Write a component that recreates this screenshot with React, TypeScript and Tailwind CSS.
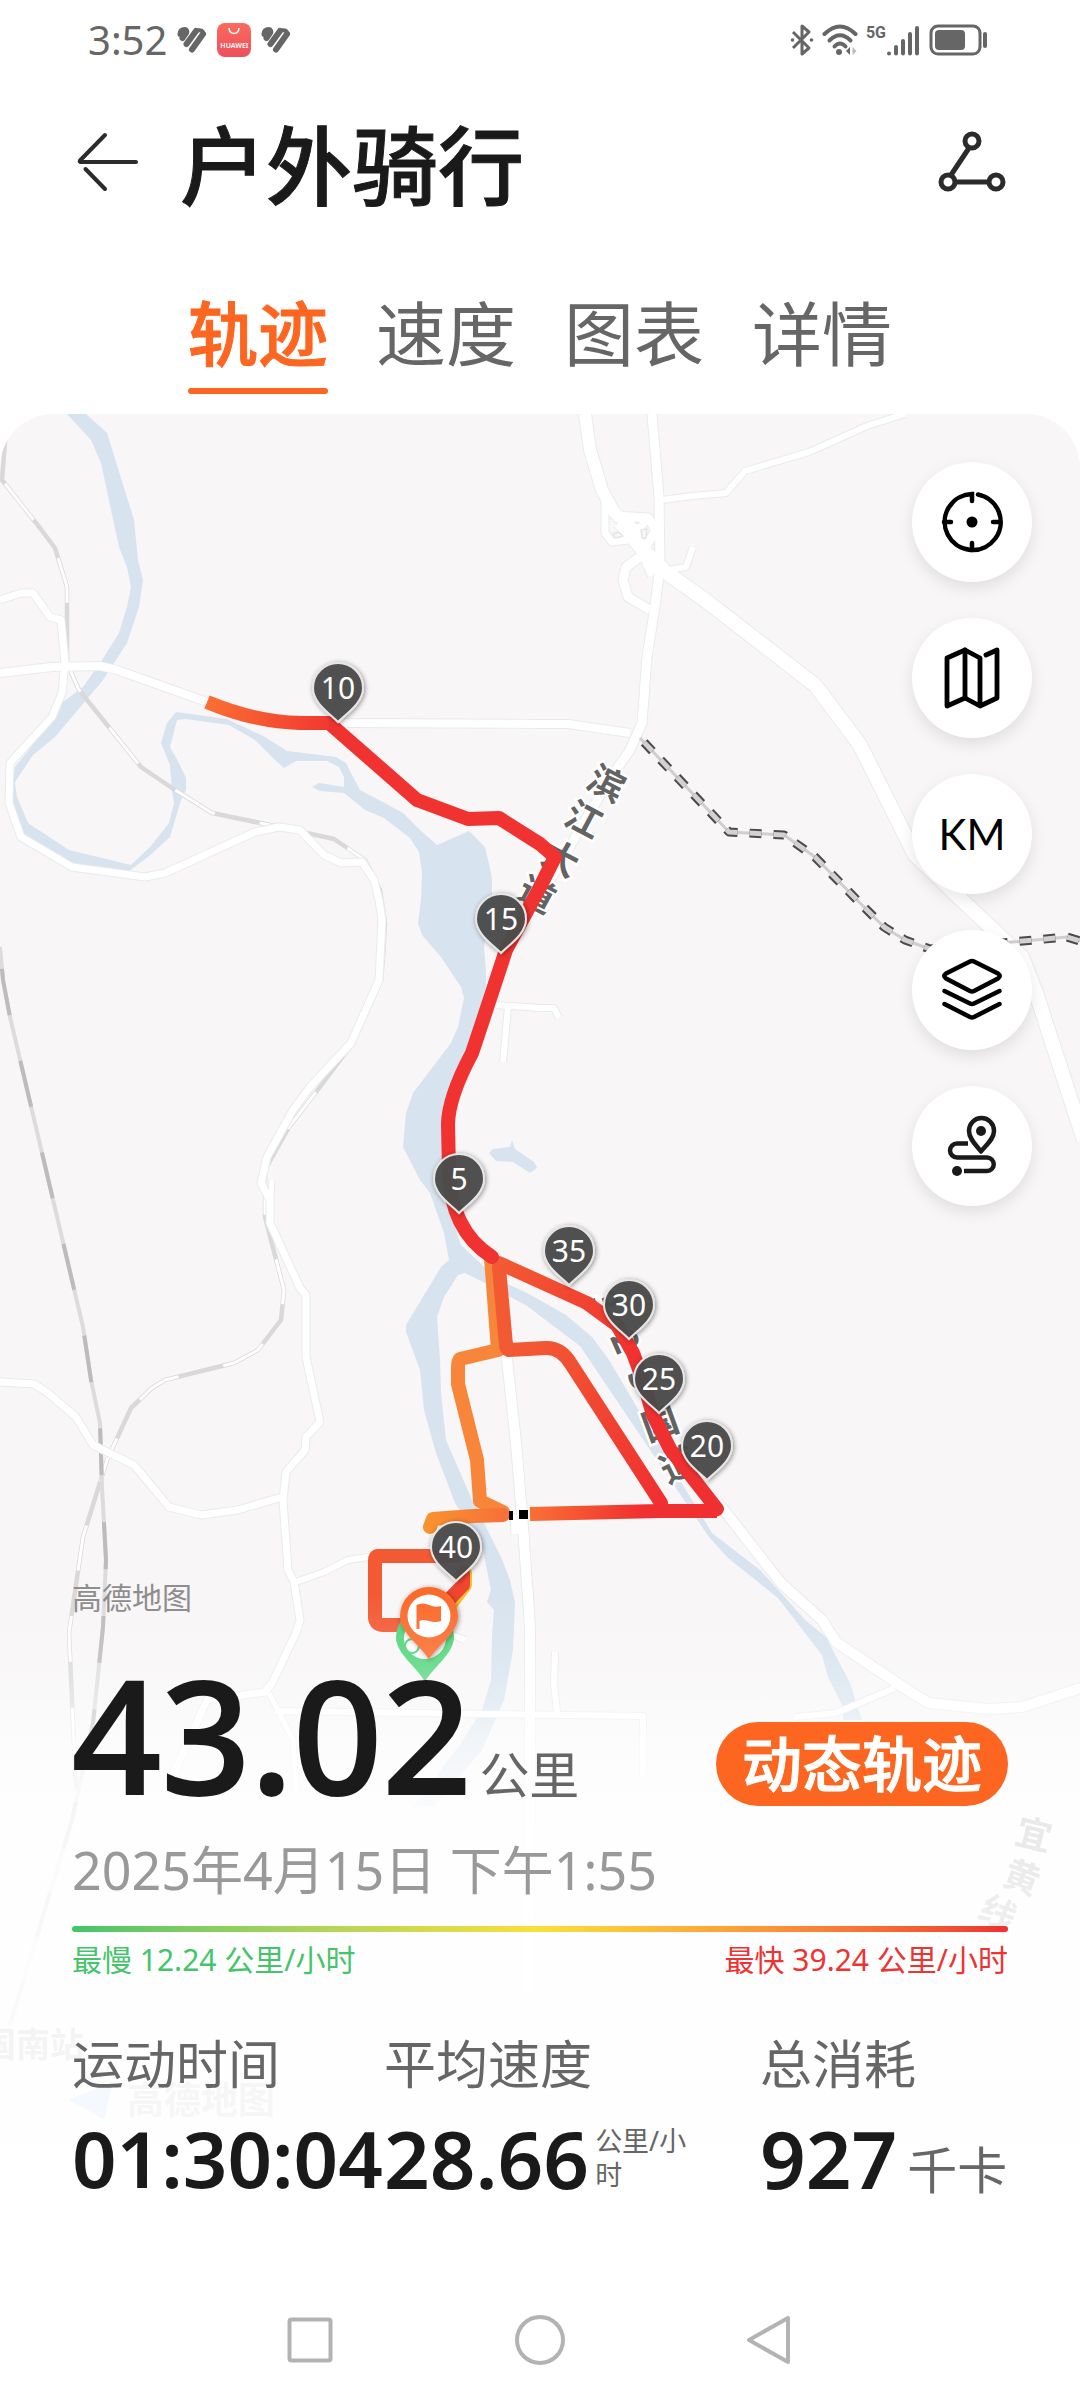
import React from "react";

const FONT = "font-['Noto_Sans','Noto_Sans_CJK_SC',sans-serif]";

/* ---------- Status bar ---------- */

function HeartMark() {
  return (
    <svg viewBox="0 0 30 28" className="h-7 w-[30px]" aria-hidden="true">
      <g fill="none" stroke="#666" strokeLinecap="round" strokeWidth="6">
        <path d="M3.500 8 Q4 4 7.500 4 Q10 4 9 7 L5.500 12" />
        <path d="M19 5 L9.500 18" />
        <path d="M26 8 L15 23.500" />
        <path d="M20 4.500 Q25.500 3 26.500 8" strokeWidth="4" />
      </g>
    </svg>
  );
}

function StatusBar() {
  return (
    <div className="flex h-20 items-center justify-between pr-[90px] pl-[88px] text-[#666]">
      <div className="flex items-center gap-2.5">
        <span className="text-[40px] leading-none">3:52</span>
        <HeartMark />
        <span className="flex h-[34px] w-[34px] flex-col items-center justify-between rounded-lg bg-linear-to-b from-[#fb6a5c] to-[#ee4f5c] pt-1 pb-2 text-white">
          <svg viewBox="0 0 12 8" className="h-2 w-3" fill="none" stroke="#fff" strokeWidth="1.500" aria-hidden="true">
            <path d="M1 1 Q1.500 6.500 6 6.500 Q10.500 6.500 11 1" />
          </svg>
          <span className="text-[7px] leading-none font-semibold">HUAWEI</span>
        </span>
        <HeartMark />
      </div>
      <div className="flex items-center gap-2">
        <svg viewBox="0 0 24 34" className="h-[34px] w-6" fill="none" stroke="#666" strokeWidth="3" aria-label="Bluetooth">
          <path d="M3 9 L19 25 L12 31 V3 L19 9 L3 25" strokeLinejoin="round" />
          <circle cx="2.500" cy="17" r="1.800" fill="#666" stroke="none" />
          <circle cx="21.500" cy="17" r="1.800" fill="#666" stroke="none" />
        </svg>
        <svg viewBox="0 0 36 34" className="h-[34px] w-9" fill="none" stroke="#666" strokeWidth="4" strokeLinecap="round" aria-label="Wi-Fi">
          <path d="M2.500 11 Q18 -4 33.500 11" />
          <path d="M7.500 17.500 Q18 7 28.500 17.500" />
          <path d="M12.500 23.500 Q18 17.500 23.500 23.500" />
          <circle cx="17" cy="29" r="3" fill="#666" stroke="none" />
          <path d="M28 24 v8 l-4 -4 z" fill="#666" stroke="none" />
          <path d="M30.500 24 v8 l4 -4 z" fill="#bbb" stroke="none" />
        </svg>
        <div className="flex items-start">
          <span className="font-[Roboto] text-[16px] leading-5 font-bold">5G</span>
          <svg viewBox="0 0 34 34" className="h-[34px] w-[34px]" stroke="#666" strokeWidth="4" strokeLinecap="round" aria-label="Signal">
            <path d="M3 30.500 V30.500 M10 30.500 V24 M17 30.500 V18 M24 30.500 V11 M31 30.500 V5" />
          </svg>
        </div>
        <svg viewBox="0 0 62 34" className="h-[34px] w-[62px]" aria-label="Battery">
          <rect x="3" y="3" width="49" height="28" rx="7" fill="none" stroke="#666" strokeWidth="3" />
          <rect x="7" y="7" width="30" height="20" rx="4" fill="#666" />
          <path d="M57 11 V23" stroke="#666" strokeWidth="4" strokeLinecap="round" />
        </svg>
      </div>
    </div>
  );
}

/* ---------- Header ---------- */

function Header() {
  return (
    <header className="flex h-[164px] items-center px-[72px]">
      <button type="button" aria-label="返回" className="h-16 w-[72px]">
        <svg viewBox="0 0 72 64" className="h-16 w-[72px]" fill="none" stroke="#2b2b2b" strokeWidth="4" strokeLinecap="round">
          <path d="M33 5 L8 30.500 Q7 32 9 32 H64" strokeLinejoin="round" />
          <path d="M13.500 39 L33 59" />
        </svg>
      </button>
      <h1 className="ml-9 flex-1 pt-2 text-[86px] leading-[120px] font-medium text-[#1a1a1a] [-webkit-text-stroke:1px_#1a1a1a]">
        户外骑行
      </h1>
      <button type="button" aria-label="分享" className="h-16 w-[72px]">
        <svg viewBox="0 0 72 64" className="h-16 w-[72px]" fill="none" stroke="#2b2b2b" strokeWidth="5">
          <circle cx="36" cy="11" r="7" />
          <circle cx="12" cy="52" r="7" />
          <circle cx="60" cy="52" r="7" />
          <path d="M33 18 L15 45 M19 52 H53" />
        </svg>
      </button>
    </header>
  );
}

const TABS = ["轨迹", "速度", "图表", "详情"];

function Tabs() {
  return (
    <nav className="flex justify-center gap-12 pt-10 pb-5" role="tablist">
      {TABS.map((tab, i) => (
        <button
          key={tab}
          type="button"
          role="tab"
          aria-selected={i === 0}
          className={
            i === 0
              ? "flex flex-col gap-1 text-[70px] leading-[100px] font-medium text-[#fc6620] [-webkit-text-stroke:1px_#fc6620]"
              : "flex flex-col gap-1 text-[70px] leading-[100px] text-[#666]"
          }
        >
          {tab}
          <span className={i === 0 ? "h-1.5 w-full rounded-full bg-[#fc6620]" : "h-1.5 w-full"} />
        </button>
      ))}
    </nav>
  );
}

/* ---------- Map ---------- */

const WATER =
  "67,414 91,440 101,463 119,547 127,567 131,587 127,607 119,633 102,660 83,687 59,705 53,717 31,747 15,767 12,783 12,807 21,837 65,865 129,871 148,857 170,837 181,800 186,790 186,778 179,763 170,747 177,720 186,719 229,725 255,740 275,760 284,768 296,761 327,761 339,767 344,777 344,787 319,783 312,787 320,791 344,793 365,810 384,818 410,838 419,852 422,873 421,900 418,923 422,935 441,957 461,987 464,998 458,1027 451,1043 413,1093 406,1113 403,1147 420,1180 430,1193 444,1233 449,1260 441,1267 406,1325 406,1332 420,1370 424,1410 436,1453 455,1503 482,1545 491,1590 487,1602 494,1610 492,1637 491,1680 482,1710 461,1743 413,1807 434,1807 482,1750 504,1700 513,1650 515,1603 510,1580 501,1557 486,1527 472,1500 446,1440 441,1393 440,1360 437,1317 444,1297 458,1275 465,1273 489,1285 527,1306 580,1346 640,1435 709,1537 728,1558 778,1598 822,1655 828,1677 843,1707 843,1720 862,1720 850,1683 826,1637 805,1620 781,1593 760,1570 712,1533 678,1477 609,1360 592,1337 566,1315 527,1293 497,1279 477,1260 461,1245 448,1207 443,1130 447,1110 470,1050 486,985 486,973 484,947 492,910 492,880 491,873 485,847 469,831 437,845 420,830 403,813 379,800 360,790 351,773 346,763 336,757 287,751 265,737 227,719 176,712 167,723 161,743 170,765 172,790 174,803 169,823 150,847 131,865 69,850 28,823 17,797 15,782 33,755 55,737 103,680 127,643 139,607 143,580 138,560 134,520 107,433 86,414";

const ROADS: { d: string; w: number }[] = [
  { w: 8, d: "M0 673 L52 667 L100 666 L117 670 L207 702 L260 718 L344 723 L540 724 L568 724 L630 733" },
  { w: 7, d: "M0 600 L21 593 L33 593 L50 617 L61 620 L65 663 L62 693 L52 717 L10 763 L9 803 L21 837 L72 867 L145 877 L165 873 L255 832 L279 827 L300 830 L324 855 L341 863 L362 862 L374 880 L379 900 L382 920 L379 980 L351 1043 L310 1087 L293 1110 L267 1157 L261 1183 L270 1200 L270 1223 L300 1288 L306 1295 L306 1357 L320 1422 L306 1437 L305 1450 L286 1472 L283 1500 L288 1570 L294 1582 L300 1620 L296 1633 L272 1683 L265 1692 L207 1700 L165 1793" },
  { w: 7, d: "M0 1382 L34 1384 L48 1393 L76 1417 L93 1445 L134 1465 L169 1507 L201 1515 L238 1510 L282 1497" },
  { w: 6, d: "M296 1582 L324 1572 L348 1560 L368 1557 L400 1556" },
  { w: 5, d: "M269 1693 L293 1740 L296 1790" },
  { w: 5, d: "M272 1180 L270 1215" },
  { w: 10, d: "M506 1350 L516 1443 L523 1527 L530 1627 L530 1807 L528 1990" },
  { w: 11, d: "M516 1515 L517 1534" },
  { w: 12, d: "M585 414 L590 450 L602 490 L614 512 L632 528 L654 575" },
  { w: 9, d: "M652 414 L659 497 L660 567 L654 613 L647 657 L642 723 L630 750 L609 780 L540 897" },
  { w: 9, d: "M614 516 L648 518 L656 530 L644 550" },
  { w: 7, d: "M605 500 L605 533 L612 542 L628 540 L645 522" },
  { w: 14, d: "M620 522 L643 550 L667 573 L705 600 L815 685 L860 745 L915 855 L967 905 L1022 957 L1036 993 L1084 1140" },
  { w: 9, d: "M640 557 L626 567 L623 580 L628 597 L650 610" },
  { w: 6, d: "M662 500 L692 496 L726 493 L745 471 L809 452 L867 426 L905 414" },
  { w: 6, d: "M670 570 L686 567 L693 547" },
  { w: 6, d: "M496 1005 L540 1008 L554 1008 L559 1018 M508 1007 L503 1062" },
  { w: 10, d: "M716 1500 L781 1583 L822 1620 L836 1642 L912 1693 L929 1703 L988 1709 L1022 1707 L1084 1687" },
  { w: 6, d: "M895 1688 L836 1713 L795 1717 M555 1652 L554 1683 L557 1712 M275 1711 L643 1716 L643 1777" },
  { w: 6, d: "M440 1630 L465 1640" },
];

const RAIL_LIGHT =
  "M6 430 L2 480 L40 528 L55 548 L67 587 L67 663 L79 690 L141 767 L172 788 L212 813 L275 826 L334 839 L365 860 L380 890 L385 923 L383 957 L381 980 L353 1043 L320 1087 L289 1127 L265 1170 L265 1217 L284 1290 L281 1320 L258 1350 L234 1363 L165 1380 L152 1388 L131 1408 L107 1460 L83 1537 L69 1633 L76 1790";
const RAIL_DARK =
  "M0 947 L3 980 L10 1017 L83 1327 L91 1380 L100 1423 L102 1487 L106 1560 L103 1627 L93 1723 L72 1820 L10 2025";
const RAIL_BORDER =
  "M640 738 L729 832 L784 835 L815 857 L857 900 L884 927 L905 940 L930 949 L1012 942 L1067 937 L1080 941";

const MARKERS = [
  { km: 35, x: 569, y: 1251 },
  { km: 30, x: 629, y: 1305 },
  { km: 25, x: 659, y: 1379 },
  { km: 20, x: 707, y: 1446 },
  { km: 15, x: 501, y: 919 },
  { km: 10, x: 338, y: 688 },
  { km: 5, x: 459, y: 1179 },
  { km: 40, x: 456, y: 1547 },
];

const LABELS = [
  { t: "滨", x: 607, y: 783, r: 28 },
  { t: "江", x: 584, y: 819, r: 28 },
  { t: "大", x: 561, y: 858, r: 28 },
  { t: "道", x: 537, y: 894, r: 28 },
  { t: "3", x: 606, y: 1302, r: 62 },
  { t: "2", x: 626, y: 1341, r: 66 },
  { t: "5", x: 643, y: 1378, r: 66 },
  { t: "国", x: 660, y: 1423, r: -20 },
  { t: "道", x: 678, y: 1464, r: -26 },
  { t: "宜", x: 1034, y: 1834, r: 14 },
  { t: "黄", x: 1022, y: 1877, r: 20 },
  { t: "线", x: 998, y: 1913, r: 28 },
];

function TrackMap() {
  return (
    <svg
      viewBox="0 414 1080 1866"
      preserveAspectRatio="xMidYMin slice"
      className="absolute inset-0 h-full w-full"
      aria-label="骑行轨迹地图"
    >
      <defs>
        <linearGradient id="startTail" gradientUnits="userSpaceOnUse" x1="207" y1="702" x2="345" y2="740">
          <stop offset="0" stopColor="#fa6f33" />
          <stop offset="1" stopColor="#f03030" />
        </linearGradient>
        <linearGradient id="eastBank" gradientUnits="userSpaceOnUse" x1="500" y1="1262" x2="640" y2="1360">
          <stop offset="0" stopColor="#f25a33" />
          <stop offset="1" stopColor="#f03030" />
        </linearGradient>
        <linearGradient id="southLeg" gradientUnits="userSpaceOnUse" x1="530" y1="0" x2="640" y2="0">
          <stop offset="0" stopColor="#fa7034" />
          <stop offset="1" stopColor="#f03030" />
        </linearGradient>
        <linearGradient id="diagonal" gradientUnits="userSpaceOnUse" x1="520" y1="1340" x2="660" y2="1500">
          <stop offset="0" stopColor="#f25a33" />
          <stop offset="1" stopColor="#f03030" />
        </linearGradient>
        <linearGradient id="westLeg" gradientUnits="userSpaceOnUse" x1="430" y1="0" x2="505" y2="0">
          <stop offset="0" stopColor="#f9912f" />
          <stop offset="1" stopColor="#f67039" />
        </linearGradient>
        <filter id="pinShadow" x="-40%" y="-40%" width="180%" height="180%">
          <feDropShadow dx="1" dy="1" stdDeviation="2.500" floodOpacity="0.45" />
        </filter>
      </defs>

      <rect x="0" y="414" width="1080" height="1866" fill="#f8f6f7" />
      <polygon points={WATER} fill="#d7e3ee" />
      <polygon
        points="489,1153 493,1149 510,1147 512,1140 515,1149 534,1162 537,1168 530,1173 513,1162 496,1161"
        fill="#d7e3ee"
      />

      <g fill="none" strokeLinejoin="round">
        <path d={RAIL_LIGHT} stroke="#d9d9d9" strokeWidth="4.500" />
        <path d={RAIL_LIGHT} stroke="#fff" strokeWidth="3" strokeDasharray="46 46" strokeDashoffset="-55" />
        <path d={RAIL_DARK} stroke="#dcdcdc" strokeWidth="4" />
        <path d={RAIL_DARK} stroke="#bcbcbc" strokeWidth="4" strokeDasharray="47 47" strokeDashoffset="-22" />
        {ROADS.map((r) => (
          <path key={`edge-${r.d}`} d={r.d} stroke="#e8ebec" strokeWidth={r.w + 2} />
        ))}
        {ROADS.map((r) => (
          <path key={r.d} d={r.d} stroke="#fff" strokeWidth={r.w} />
        ))}
        <path d={RAIL_BORDER} stroke="#cfcfcf" strokeWidth="3" />
        <path d={RAIL_BORDER} stroke="#4a4a4a" strokeWidth="9" strokeDasharray="12 12" strokeDashoffset="-6" />
        <path d={RAIL_BORDER} stroke="#d2d2d2" strokeWidth="5" strokeDasharray="12 12" strokeDashoffset="-6" />
        <g stroke="#e3e6e8" strokeWidth="1.500" fill="#f8f6f7">
          <path d="M613 534 L618 532 L623 536 L615 538 Z" />
          <path d="M641 530 L647 529 L646 538 L642 538 Z" />
        </g>
      </g>

      <g
        fontSize="36"
        fontWeight="700"
        fill="#636363"
        stroke="#fff"
        strokeWidth="5"
        paintOrder="stroke"
        textAnchor="middle"
        dominantBaseline="central"
      >
        {LABELS.map((l) => (
          <text key={`${l.t}-${l.x}`} x={l.x} y={l.y} transform={`rotate(${l.r} ${l.x} ${l.y})`}>
            {l.t}
          </text>
        ))}
      </g>
      <text x="-18" y="2057" fontSize="34" fontWeight="700" fill="#636363">
        国南站
      </text>
      <path d="M68 2100 L113 2082 L104 2120 L86 2109 Z" fill="#5aa0ff" />
      <text x="127" y="2114" fontSize="37" fontWeight="700" fill="#777">
        高德地图
      </text>

      <g fill="none" strokeWidth="14" strokeLinejoin="round" strokeLinecap="round">
        <path d="M491 1258 L498 1350 L460 1359 Q458 1361 458 1368 L458 1384 L477 1460 L480 1501 L503 1512" stroke="#f8863a" />
        <path d="M503 1515 L473 1516 L433 1519 L430 1527" stroke="url(#westLeg)" />
        <path d="M530 1514 L660 1511 L717 1511" stroke="url(#southLeg)" strokeLinecap="butt" />
        <path d="M661 1503 L571 1364 Q561 1347 545 1348 L509 1350 Q506 1349 506 1345 L499 1268" stroke="url(#diagonal)" />
        <path d="M499 1263 L587 1303 L617 1325 L633 1353 L643 1380 L653 1415 L670 1449 L717 1509 L712 1511 L660 1511" stroke="url(#eastBank)" />
        <path d="M329 723 L417 800 L468 819 L499 818 L540 844 L555 857 L540 887 L506 950 L482 1023 L472 1053 Q448 1098 448 1125 L449 1170 Q450 1230 492 1257" stroke="#f03330" />
        <path d="M207 702 Q255 722 300 723 L329 723" stroke="url(#startTail)" strokeLinecap="butt" />
        <path d="M465 1573 L465 1585 L444 1613" stroke="#f4c02f" />
        <path d="M457 1556 H378 Q375 1556 375 1560 V1618 Q376 1625 383 1625 H410" stroke="#f35a34" />
        <path d="M463 1573 L463 1585 L440 1609" stroke="#f0452f" />
      </g>
      <rect x="509" y="1511" width="4" height="9" fill="#000" />
      <rect x="519" y="1510" width="9" height="9" fill="#000" />

      {MARKERS.map((m) => (
        <g key={m.km} transform={`translate(${m.x} ${m.y})`}>
          <path
            d="M0 34 C-9 25 -25 15 -25 0 A25 25 0 0 1 25 0 C25 15 9 25 0 34 Z"
            fill="#4a4a4a"
            fillOpacity="0.94"
            stroke="#e6e6e6"
            strokeWidth="2"
            filter="url(#pinShadow)"
          />
          <text y="11" fontSize="30" fill="#fff" textAnchor="middle">
            {m.km}
          </text>
        </g>
      ))}

      <g>
        <path d="M425 1682 C418 1668 396 1654 396 1637 A29 29 0 0 1 454 1637 C454 1654 432 1668 425 1682 Z" fill="#4fd579" />
        <circle cx="425" cy="1638" r="21" fill="#fff" />
        <circle cx="412" cy="1646" r="7" fill="none" stroke="#4fd579" strokeWidth="2" />
        <path
          d="M429 1660 C423 1647 400 1634 400 1616 A29 29 0 0 1 458 1616 C458 1634 435 1647 429 1660 Z"
          fill="#fc6a2c"
          filter="url(#pinShadow)"
        />
        <circle cx="429" cy="1616" r="21.500" fill="#fff" />
        <path d="M416.500 1605 Q423 1602 429 1605 T441 1606 V1621 Q435 1623 429 1621 T419.500 1621 V1629 H416.500 Z" fill="#fc6a2c" />
      </g>
    </svg>
  );
}

const CONTROLS: { label: string; icon: React.ReactNode }[] = [
  {
    label: "定位",
    icon: (
      <svg viewBox="0 0 64 64" className="h-16 w-16" fill="none" stroke="#000" strokeWidth="4.500" strokeLinecap="round">
        <path d="M38 4.500 A28 28 0 1 1 32 4 V11" />
        <path d="M4 32 H11 M60 32 H53 M32 60 V53" />
        <circle cx="32" cy="32" r="5.500" fill="#000" stroke="none" />
      </svg>
    ),
  },
  {
    label: "地图类型",
    icon: (
      <svg viewBox="0 0 64 64" className="h-16 w-16" fill="none" stroke="#000" strokeWidth="4.800" strokeLinejoin="round" strokeLinecap="round">
        <path d="M40 60 V12 L25 4 L7 12 V60 L25 52 L40 60 L57 52 V4 L46 9" />
        <path d="M25 4 V52" />
      </svg>
    ),
  },
  { label: "KM", icon: <span className="font-[Lato] text-[42px] leading-none">KM</span> },
  {
    label: "图层",
    icon: (
      <svg viewBox="0 0 64 64" className="h-16 w-16" fill="none" stroke="#000" strokeWidth="4.500" strokeLinejoin="round" strokeLinecap="round">
        <path d="M30 3.500 Q32 2.500 34 3.500 L58 15.500 Q61.500 18 58 20.500 L34 33 Q32 34 30 33 L6 20.500 Q2.500 18 6 15.500 Z" />
        <path d="M4.500 33 L30 45.500 Q32 46.500 34 45.500 L59.500 33" />
        <path d="M4.500 46 L30 59 Q32 60 34 59 L59.500 46" />
      </svg>
    ),
  },
  {
    label: "轨迹样式",
    icon: (
      <svg viewBox="0 0 64 64" className="h-16 w-16" fill="none" stroke="#1a1a1a" strokeWidth="4.500" strokeLinejoin="round">
        <path d="M41 37.500 C36 31 29 25 29 17 A12.500 13 0 0 1 54 17 C54 25 46 31 41 37.500 Z" />
        <circle cx="41" cy="17" r="5" fill="#1a1a1a" stroke="none" />
        <path d="M28 29.500 H17 A7 7 0 0 0 17 43.500 H47 A6.700 6.700 0 0 1 47 57 H24" />
        <circle cx="17" cy="57" r="5" fill="#1a1a1a" stroke="none" />
      </svg>
    ),
  },
];

function MapControls() {
  return (
    <div className="flex flex-col items-end gap-9 pt-12 pr-12">
      {CONTROLS.map((c) => (
        <button
          key={c.label}
          type="button"
          aria-label={c.label}
          className="flex h-[120px] w-[120px] items-center justify-center rounded-full bg-white text-black shadow-[0_6px_16px_rgba(0,0,0,0.1)]"
        >
          {c.icon}
        </button>
      ))}
    </div>
  );
}

/* ---------- Summary ---------- */

function Summary() {
  return (
    <div className="px-[72px] pb-20">
      <p className="text-[30px] leading-10 text-[#8e8e8e]">高德地图</p>
      <div className="mt-9 flex items-end justify-between">
        <p className="flex items-baseline gap-2 whitespace-nowrap">
          <span className="text-[156px] leading-[160px] font-medium text-[#1a1a1a] [-webkit-text-stroke:2px_#1a1a1a]">43.02</span>
          <span className="text-[50px] leading-[60px] text-[#666]">公里</span>
        </p>
        <button
          type="button"
          className="mb-2 h-[84px] rounded-full bg-[#fc6620] px-[26px] text-[60px] leading-[84px] font-medium text-white [-webkit-text-stroke:1px_#fff]"
        >
          动态轨迹
        </button>
      </div>
      <p className="mt-[26px] text-[52px] leading-[60px] text-[#999]">2025年4月15日 下午1:55</p>
      <div className="mt-[26px] h-1.5 rounded-full bg-linear-to-r from-[#3fc568] via-[#fadf3a] to-[#ee2f30]" />
      <div className="mt-2 flex justify-between text-[30px] leading-10">
        <span className="text-[#45c46c]">最慢 12.24 公里/小时</span>
        <span className="text-[#ee3333]">最快 39.24 公里/小时</span>
      </div>
      <dl className="mt-[54px] grid grid-cols-[312fr_376fr_248fr] whitespace-nowrap">
        <div>
          <dt className="text-[52px] leading-[60px] text-[#666]">运动时间</dt>
          <dd className="mt-6 text-[78px] leading-[80px] font-semibold text-[#1a1a1a]">01:30:04</dd>
        </div>
        <div>
          <dt className="text-[52px] leading-[60px] text-[#666]">平均速度</dt>
          <dd className="mt-6 flex items-center gap-1.5">
            <span className="text-[80px] leading-[80px] font-semibold text-[#1a1a1a]">28.66</span>
            <span className="w-24 text-[27px] leading-[34px] whitespace-normal text-[#666]">公里/小时</span>
          </dd>
        </div>
        <div>
          <dt className="text-[52px] leading-[60px] text-[#666]">总消耗</dt>
          <dd className="mt-6 flex items-baseline gap-2.5">
            <span className="text-[80px] leading-[80px] font-semibold text-[#1a1a1a]">927</span>
            <span className="text-[50px] leading-[60px] text-[#666]">千卡</span>
          </dd>
        </div>
      </dl>
    </div>
  );
}

/* ---------- System navigation ---------- */

function SystemNav() {
  return (
    <nav className="flex h-[120px] items-center justify-center gap-[174px]">
      <button type="button" aria-label="最近任务">
        <svg viewBox="0 0 56 56" className="h-14 w-14" fill="none" stroke="#b3b3b3" strokeWidth="4">
          <rect x="7.500" y="7.500" width="41" height="41" rx="2" />
        </svg>
      </button>
      <button type="button" aria-label="主屏幕">
        <svg viewBox="0 0 56 56" className="h-14 w-14" fill="none" stroke="#b3b3b3" strokeWidth="4">
          <circle cx="28" cy="28" r="23" />
        </svg>
      </button>
      <button type="button" aria-label="返回上一页">
        <svg viewBox="0 0 56 56" className="h-14 w-14" fill="none" stroke="#b3b3b3" strokeWidth="4" strokeLinejoin="round">
          <path d="M46 6 V50 L7 28 Z" />
        </svg>
      </button>
    </nav>
  );
}

export default function App() {
  return (
    <div className={`flex min-h-screen flex-col bg-white ${FONT}`}>
      <StatusBar />
      <Header />
      <Tabs />
      <main className="relative flex flex-1 flex-col justify-between overflow-hidden rounded-t-[54px]">
        <TrackMap />
        <div className="absolute inset-x-0 bottom-0 h-[700px] bg-[linear-gradient(to_bottom,rgba(255,255,255,0)_2%,rgba(255,255,255,0.15)_11%,rgba(255,255,255,0.35)_17%,rgba(255,255,255,0.65)_23%,rgba(255,255,255,0.85)_31%,rgba(255,255,255,0.92)_60%,rgba(255,255,255,0.94)_80%,rgba(255,255,255,1)_95%)]" />
        <div className="relative">
          <MapControls />
        </div>
        <div className="relative">
          <Summary />
        </div>
      </main>
      <SystemNav />
    </div>
  );
}
